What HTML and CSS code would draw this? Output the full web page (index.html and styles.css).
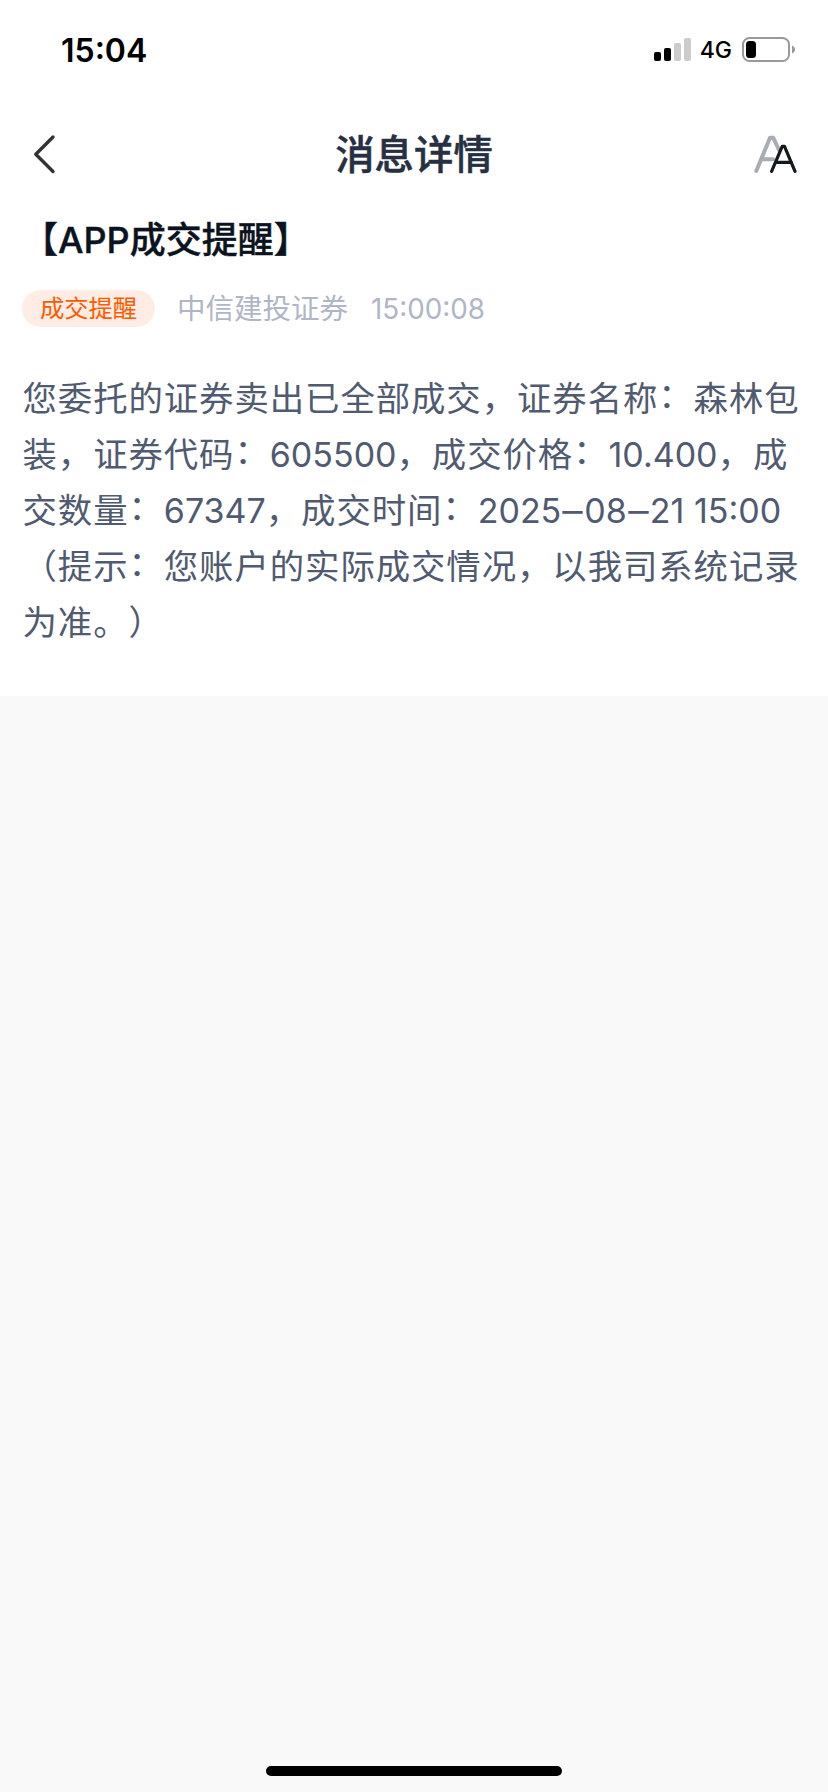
FILE: index.html
```html
<!DOCTYPE html>
<html lang="zh-CN">
<head>
<meta charset="utf-8">
<title>消息详情</title>
<link rel="stylesheet" href="styles.css">
</head>
<body>
<div class="screen">
  <main class="card">
    <div class="status">
      <span class="clock">15:04</span>
      <div class="indicators">
        <svg class="signal" width="38" height="24" viewBox="0 0 38 24">
          <rect x="0" y="14" width="7" height="9" rx="2"/>
          <rect x="10" y="10" width="7" height="13" rx="2"/>
          <rect class="off" x="20" y="5" width="7" height="18" rx="2"/>
          <rect class="off" x="30" y="0" width="7" height="23" rx="2"/>
        </svg>
        <span class="network">4G</span>
        <svg class="battery" width="54" height="26" viewBox="0 0 54 26">
          <rect x="1" y="1" width="46" height="23" rx="6.5" fill="none" stroke="#999" stroke-width="2"/>
          <rect x="4" y="4" width="10" height="17" rx="3.5"/>
          <path d="M50 8.5c4 1.5 4 6.5 0 8z" fill="#999"/>
        </svg>
      </div>
    </div>
    <header class="nav">
      <svg class="back" width="24" height="42" viewBox="0 0 24 42">
        <path d="M20 3L2.8 20.3L20 37.5" fill="none" stroke="#333" stroke-width="3.4" stroke-linecap="round" stroke-linejoin="round"/>
      </svg>
      <h1 class="nav-title">消息详情</h1>
      <svg class="font-size" width="44" height="40" viewBox="0 0 44 40" fill="none" stroke-linecap="round" stroke-linejoin="round">
        <path d="M3.3 36L17 2.7H20.2L26 15M9 24.3H20" stroke="#a9acb1" stroke-width="4"/>
        <path d="M18.6 36.3L29.2 11.3H31.5L42 36.3M22.5 27.4H38.5" stroke="#14191e" stroke-width="3.2"/>
      </svg>
    </header>
    <h2 class="subject">【APP成交提醒】</h2>
    <div class="meta">
      <span class="tag">成交提醒</span>
      <span class="source">中信建投证券</span>
      <time class="time">15:00:08</time>
    </div>
    <p class="body">
      <span class="line">您委托的证券卖出已全部成交，证券名称<span class="colon">：</span>森林包</span>
      <span class="line">装，证券代码<span class="colon">：</span><span class="num">605500</span>，成交价格<span class="colon">：</span><span class="num">10.400</span>，成</span>
      <span class="line">交数量<span class="colon">：</span><span class="num">67347</span>，成交时间<span class="colon">：</span><span class="num">2025<span class="dash">–</span>08<span class="dash">–</span>21 15:00</span></span>
      <span class="line">（提示<span class="colon">：</span>您账户的实际成交情况，以我司系统记录</span>
      <span class="line">为准。）</span>
    </p>
  </main>
  <div class="home-bar"></div>
</div>
</body>
</html>
```
FILE: styles.css
```css
* { box-sizing: border-box; margin: 0; padding: 0; }
body {
  font-family: Inter, "Noto Sans CJK SC", sans-serif;
  text-spacing-trim: space-all;
  background: #f9f9f9;
}
svg { display: block; }
.screen {
  height: 1792px;
  display: flex;
  flex-direction: column;
  justify-content: space-between;
  align-items: center;
  padding-bottom: 16px;
  background: #f9f9f9;
}
.card { width: 828px; height: 696px; background: #fff; }
.status {
  height: 100px;
  display: flex;
  justify-content: space-between;
  align-items: center;
  padding: 0 32px 0 61px;
}
.clock { font-size: 32px; font-weight: 600; color: #000; }
.indicators { display: flex; align-items: center; gap: 8px; }
.battery { margin-left: 2px; }
.off { fill: #ccc; }
.network { font-size: 23px; font-weight: 500; }
.nav {
  height: 108px;
  display: grid;
  grid-template-columns: 44px 1fr 44px;
  align-items: center;
  padding: 2px 31px 0 33px;
}
.nav-title {
  font-size: 39.4px;
  line-height: 56px;
  font-weight: 500;
  text-align: center;
  text-indent: -2px;
  color: #272f42;
  -webkit-text-stroke: 0.5px #272f42;
}
.subject {
  height: 64px;
  padding-left: 22px;
  font-size: 36px;
  line-height: 64px;
  font-weight: 500;
  color: #0c1320;
  -webkit-text-stroke: 0.4px #0c1320;
  white-space: nowrap;
}
.meta { height: 72px; display: flex; align-items: center; padding-left: 22px; }
.tag {
  width: 133px;
  height: 37px;
  border-radius: 19px;
  background: #ffede5;
  color: #ff5a00;
  font-size: 24.3px;
  line-height: 37px;
  text-align: center;
}
.source { margin: 2px 0 0 22px; font-size: 28.5px; line-height: 40px; color: #b0b6c5; }
.time { margin: 2px 0 0 23px; font-size: 27.8px; line-height: 40px; color: #b0b6c5; }
.body {
  padding: 27px 0 0 22.5px;
  font-size: 34.4px;
  letter-spacing: 0.93px;
  line-height: 56px;
  color: #505a70;
}
.line { display: block; height: 56px; white-space: nowrap; }
.num { font-size: 34px; letter-spacing: 0; }
.dash { display: inline-block; margin: 0 3px; transform: scaleX(1.2); }
.colon { display: inline-block; transform: translateY(-3px); }
.home-bar { width: 296px; height: 10px; border-radius: 5px; background: #000; }
```
